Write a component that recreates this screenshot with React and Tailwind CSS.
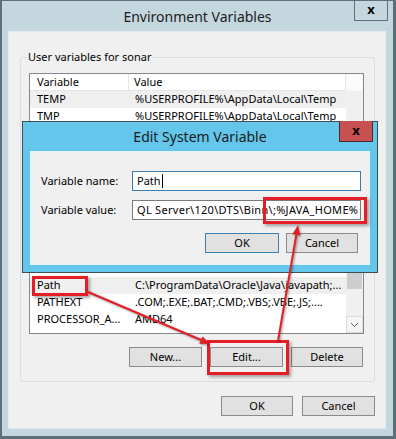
import React from 'react';

// Classic Windows 8 dialog pieces
const WinButton = ({ children, className = '', primary = false }) => (
  <div
    className={`flex h-[20px] items-center justify-center border bg-[#e1e1e1] text-black ${
      primary ? 'border-[#3c7fb1]' : 'border-[#8a8a8a]'
    } ${className}`}
  >
    {children}
  </div>
);

const Row = ({ name, value, selected = false }) => (
  <div className={`flex h-[17px] shrink-0 items-center ${selected ? 'bg-[#efefef]' : ''}`}>
    <div className="w-[99px] shrink-0 overflow-hidden whitespace-nowrap pl-[7px]">{name}</div>
    <div className="flex-1 overflow-hidden whitespace-nowrap pl-[6px]">{value}</div>
  </div>
);

const RedBox = ({ className }) => (
  <div
    className={`absolute border-[3px] border-[#e41e26] shadow-[2px_2px_3px_rgba(0,0,0,0.35)] ${className}`}
  />
);

const App = () => {
  return (
    <div className="relative h-[439px] w-[396px] overflow-hidden font-['Noto_Sans',sans-serif] text-[11px] text-black">
      {/* Environment Variables window */}
      <div className="flex h-full flex-col border-b-[3px] border-l-2 border-r-[3px] border-t border-[#5f6f77] bg-[#c5d7de]">
        <div className="relative flex h-[30px] shrink-0 items-center justify-center">
          <span className="text-[14px] text-[#1b1b1b]">Environment Variables</span>
          <div className="absolute right-[5px] top-[-1px] flex h-[21px] w-[34px] items-center justify-center border border-t-0 border-[#5f6f77] text-[13px] font-bold">
            x
          </div>
        </div>

        <div className="mb-[7px] ml-[6px] mr-[7px] flex flex-1 flex-col border border-[#e2eaee] bg-[#f0f0f0]">
          <fieldset className="ml-[11px] mr-[10px] mt-[17px] rounded-[3px] border border-[#d5dfe5] pb-[14px] pl-[8px] pr-[10px]">
            <legend className="ml-[-2px] px-[1px] leading-[16px]">User variables for sonar</legend>

            {/* list view */}
            <div className="mt-[8px] flex h-[261px] border border-[#828790] bg-white">
              <div className="flex flex-1 flex-col overflow-hidden">
                <div className="flex h-[17px] shrink-0 items-center border-b border-[#e5e5e5]">
                  <div className="flex h-full w-[99px] items-center border-r border-[#e5e5e5] pl-[7px]">Variable</div>
                  <div className="flex h-full flex-1 items-center border-r border-[#e5e5e5] pl-[5px]">Value</div>
                </div>
                <Row name="TEMP" value="%USERPROFILE%\AppData\Local\Temp" selected />
                <Row name="TMP" value="%USERPROFILE%\AppData\Local\Temp" />
                <div className="h-[152px] shrink-0" />
                <Row name="Path" value="C:\ProgramData\Oracle\Java\javapath;..." selected />
                <Row name="PATHEXT" value=".COM;.EXE;.BAT;.CMD;.VBS;.VBE;.JS;...." />
                <Row name="PROCESSOR_A..." value="AMD64" />
              </div>
              {/* scrollbar */}
              <div className="flex w-[17px] shrink-0 flex-col bg-[#f0f0f0]">
                <div className="h-[17px] shrink-0 border border-[#f8f8f8] bg-[#fbfbfb]" />
                <div className="flex-1 px-[1px]">
                  <div className="mt-[171px] h-[27px] bg-[#cdcdcd]" />
                </div>
                <div className="flex h-[17px] shrink-0 items-center justify-center border border-[#dcdcdc] bg-[#f4f4f4]">
                  <svg width="9" height="6" viewBox="0 0 9 6" fill="none" stroke="#606060" strokeWidth="1">
                    <path d="M1 1l3.5 3.5L8 1" />
                  </svg>
                </div>
              </div>
            </div>

            <div className="mt-[13px] flex justify-end gap-[8px] pr-[1px]">
              <WinButton className="w-[73px]">New...</WinButton>
              <WinButton className="w-[73px]">Edit...</WinButton>
              <WinButton className="w-[72px]">Delete</WinButton>
            </div>
          </fieldset>

          <div className="mr-[10px] mt-[14px] flex justify-end gap-[9px]">
            <WinButton className="w-[72px]">OK</WinButton>
            <WinButton className="w-[73px]">Cancel</WinButton>
          </div>
        </div>
      </div>

      {/* Edit System Variable dialog, over the list */}
      <div className="absolute left-[22px] top-[121px] flex h-[152px] w-[356px] flex-col border border-[#3f4d55] bg-[#63c6ea]">
        <div className="relative flex h-[29px] shrink-0 items-center justify-center">
          <span className="text-[14px] text-[#1b1b1b]">Edit System Variable</span>
          <div className="absolute right-[4px] top-[-1px] flex h-[21px] w-[34px] items-center justify-center border border-t-0 border-[#4a2a2a] bg-[#c75050] text-[13px] font-bold">
            x
          </div>
        </div>
        <div className="mb-[7px] ml-[7px] mr-[7px] flex flex-1 flex-col border border-[#e6f3f8] bg-[#f0f0f0] pr-[8px] pt-[19px]">
          <div className="flex h-[20px] items-center">
            <div className="w-[101px] shrink-0 pl-[10px]">Variable name:</div>
            <div className="flex h-full flex-1 items-center border border-[#3d7bad] bg-white pl-[4px]">
              Path
              <span className="ml-[1px] h-[14px] w-[1px] bg-black" />
            </div>
          </div>
          <div className="mt-[9px] flex h-[20px] items-center">
            <div className="w-[101px] shrink-0 pl-[10px]">Variable value:</div>
            <div className="flex h-full flex-1 items-center overflow-hidden whitespace-nowrap border border-[#7a7a7a] bg-white pl-[4px] tracking-[0.3px]">
              QL Server\120\DTS\Binn\;%JAVA_HOME%
            </div>
          </div>
          <div className="mt-[13px] flex justify-end gap-[7px] pr-[3px]">
            <WinButton className="w-[74px]" primary>
              OK
            </WinButton>
            <WinButton className="w-[72px]">Cancel</WinButton>
          </div>
        </div>
      </div>

      {/* red annotations */}
      <RedBox className="left-[263px] top-[197px] h-[27px] w-[104px]" />
      <RedBox className="left-[32px] top-[276px] h-[20px] w-[56px]" />
      <RedBox className="left-[207px] top-[340px] h-[35px] w-[82px]" />
      <svg
        className="pointer-events-none absolute left-0 top-0 drop-shadow-[1px_1px_1px_rgba(0,0,0,0.4)]"
        width="396"
        height="439"
        viewBox="0 0 396 439"
      >
        <line x1="88" y1="292" x2="201" y2="340" stroke="#e41e26" strokeWidth="2" />
        <polygon points="210,344 199.2,343.8 202.4,336.4" fill="#e41e26" />
        <line x1="278" y1="341" x2="296.3" y2="235" stroke="#e41e26" strokeWidth="2" />
        <polygon points="298,225 300.2,235.6 292.4,234.2" fill="#e41e26" />
      </svg>
    </div>
  );
};

export default App;
